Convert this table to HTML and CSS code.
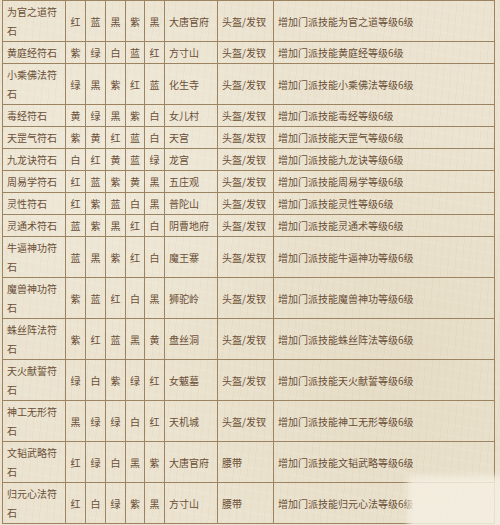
FILE: index.html
```html
<!DOCTYPE html>
<html lang="zh">
<head>
<meta charset="utf-8">
<title>符石表</title>
<link rel="stylesheet" href="styles.css">
</head>
<body>
<div class="page">
<table class="stones">
<colgroup>
<col class="c-name"><col class="c-col"><col class="c-col"><col class="c-col"><col class="c-col4"><col class="c-col"><col class="c-place"><col class="c-slot"><col class="c-effect">
</colgroup>
<tbody>
<tr><td class="name">为官之道符石</td><td>红</td><td>蓝</td><td>黑</td><td>紫</td><td>黑</td><td class="l">大唐官府</td><td class="l">头盔/发钗</td><td class="l">增加门派技能为官之道等级6级</td></tr>
<tr><td class="name">黄庭经符石</td><td>紫</td><td>绿</td><td>白</td><td>蓝</td><td>红</td><td class="l">方寸山</td><td class="l">头盔/发钗</td><td class="l">增加门派技能黄庭经等级6级</td></tr>
<tr><td class="name">小乘佛法符石</td><td>绿</td><td>黑</td><td>紫</td><td>红</td><td>蓝</td><td class="l">化生寺</td><td class="l">头盔/发钗</td><td class="l">增加门派技能小乘佛法等级6级</td></tr>
<tr><td class="name">毒经符石</td><td>黄</td><td>绿</td><td>黑</td><td>紫</td><td>白</td><td class="l">女儿村</td><td class="l">头盔/发钗</td><td class="l">增加门派技能毒经等级6级</td></tr>
<tr><td class="name">天罡气符石</td><td>紫</td><td>黄</td><td>红</td><td>蓝</td><td>白</td><td class="l">天宫</td><td class="l">头盔/发钗</td><td class="l">增加门派技能天罡气等级6级</td></tr>
<tr><td class="name">九龙诀符石</td><td>白</td><td>红</td><td>黄</td><td>蓝</td><td>绿</td><td class="l">龙宫</td><td class="l">头盔/发钗</td><td class="l">增加门派技能九龙诀等级6级</td></tr>
<tr><td class="name">周易学符石</td><td>红</td><td>蓝</td><td>紫</td><td>黄</td><td>黑</td><td class="l">五庄观</td><td class="l">头盔/发钗</td><td class="l">增加门派技能周易学等级6级</td></tr>
<tr><td class="name">灵性符石</td><td>红</td><td>紫</td><td>蓝</td><td>白</td><td>黑</td><td class="l">普陀山</td><td class="l">头盔/发钗</td><td class="l">增加门派技能灵性等级6级</td></tr>
<tr><td class="name">灵通术符石</td><td>蓝</td><td>紫</td><td>黑</td><td>红</td><td>白</td><td class="l">阴曹地府</td><td class="l">头盔/发钗</td><td class="l">增加门派技能灵通术等级6级</td></tr>
<tr><td class="name">牛逼神功符石</td><td>蓝</td><td>黑</td><td>紫</td><td>红</td><td>白</td><td class="l">魔王寨</td><td class="l">头盔/发钗</td><td class="l">增加门派技能牛逼神功等级6级</td></tr>
<tr><td class="name">魔兽神功符石</td><td>紫</td><td>蓝</td><td>红</td><td>白</td><td>黑</td><td class="l">狮驼岭</td><td class="l">头盔/发钗</td><td class="l">增加门派技能魔兽神功等级6级</td></tr>
<tr><td class="name">蛛丝阵法符石</td><td>紫</td><td>红</td><td>蓝</td><td>黑</td><td>黄</td><td class="l">盘丝洞</td><td class="l">头盔/发钗</td><td class="l">增加门派技能蛛丝阵法等级6级</td></tr>
<tr><td class="name">天火献誓符石</td><td>绿</td><td>白</td><td>紫</td><td>绿</td><td>红</td><td class="l">女魃墓</td><td class="l">头盔/发钗</td><td class="l">增加门派技能天火献誓等级6级</td></tr>
<tr><td class="name">神工无形符石</td><td>黑</td><td>绿</td><td>绿</td><td>白</td><td>红</td><td class="l">天机城</td><td class="l">头盔/发钗</td><td class="l">增加门派技能神工无形等级6级</td></tr>
<tr><td class="name">文韬武略符石</td><td>红</td><td>绿</td><td>白</td><td>黑</td><td>紫</td><td class="l">大唐官府</td><td class="l">腰带</td><td class="l">增加门派技能文韬武略等级6级</td></tr>
<tr><td class="name">归元心法符石</td><td>红</td><td>白</td><td>绿</td><td>紫</td><td>黑</td><td class="l">方寸山</td><td class="l">腰带</td><td class="l">增加门派技能归元心法等级6级</td></tr>
</tbody>
</table>
<div class="watermark"></div>
</div>
</body>
</html>
```
FILE: styles.css
```css
html, body {
  margin: 0;
  padding: 0;
}
body {
  width: 500px;
  height: 525px;
  overflow: hidden;
  background-color: #ebe3cf;
  background-image:
    radial-gradient(ellipse at 20% 30%, rgba(255,255,255,0.22), transparent 40%),
    radial-gradient(ellipse at 80% 70%, rgba(190,170,130,0.12), transparent 45%),
    repeating-linear-gradient(95deg, rgba(160,140,100,0.05) 0 1px, transparent 1px 7px),
    repeating-linear-gradient(10deg, rgba(255,255,255,0.08) 0 2px, transparent 2px 11px);
  font-family: "Noto Sans CJK SC", "Noto Sans", sans-serif;
  color: #6a4e36;
}
.page {
  position: relative;
  width: 500px;
  height: 525px;
  padding-left: 2px;
  box-sizing: border-box;
}
.stones {
  border-collapse: collapse;
  table-layout: fixed;
  width: 493px;
  font-size: 10px;
  line-height: 19px;
}
.c-name { width: 63px; }
.c-col { width: 20px; }
.c-col4 { width: 19px; }
.c-place { width: 53px; }
.c-slot { width: 56px; }
.c-effect { width: 221px; }
.stones td {
  border: 1px solid #9c8462;
  padding: 1px 0;
  text-align: center;
  vertical-align: middle;
  white-space: nowrap;
}
.stones td.l {
  text-align: left;
  padding-left: 4px;
}
.stones td.name {
  text-align: left;
  padding-left: 4px;
  padding-right: 3px;
  white-space: normal;
  word-break: break-all;
}
.watermark {
  position: absolute;
  left: 408px;
  top: 476px;
  width: 100px;
  height: 60px;
  background: rgba(244, 238, 226, 0.85);
  filter: blur(3px);
}
```
